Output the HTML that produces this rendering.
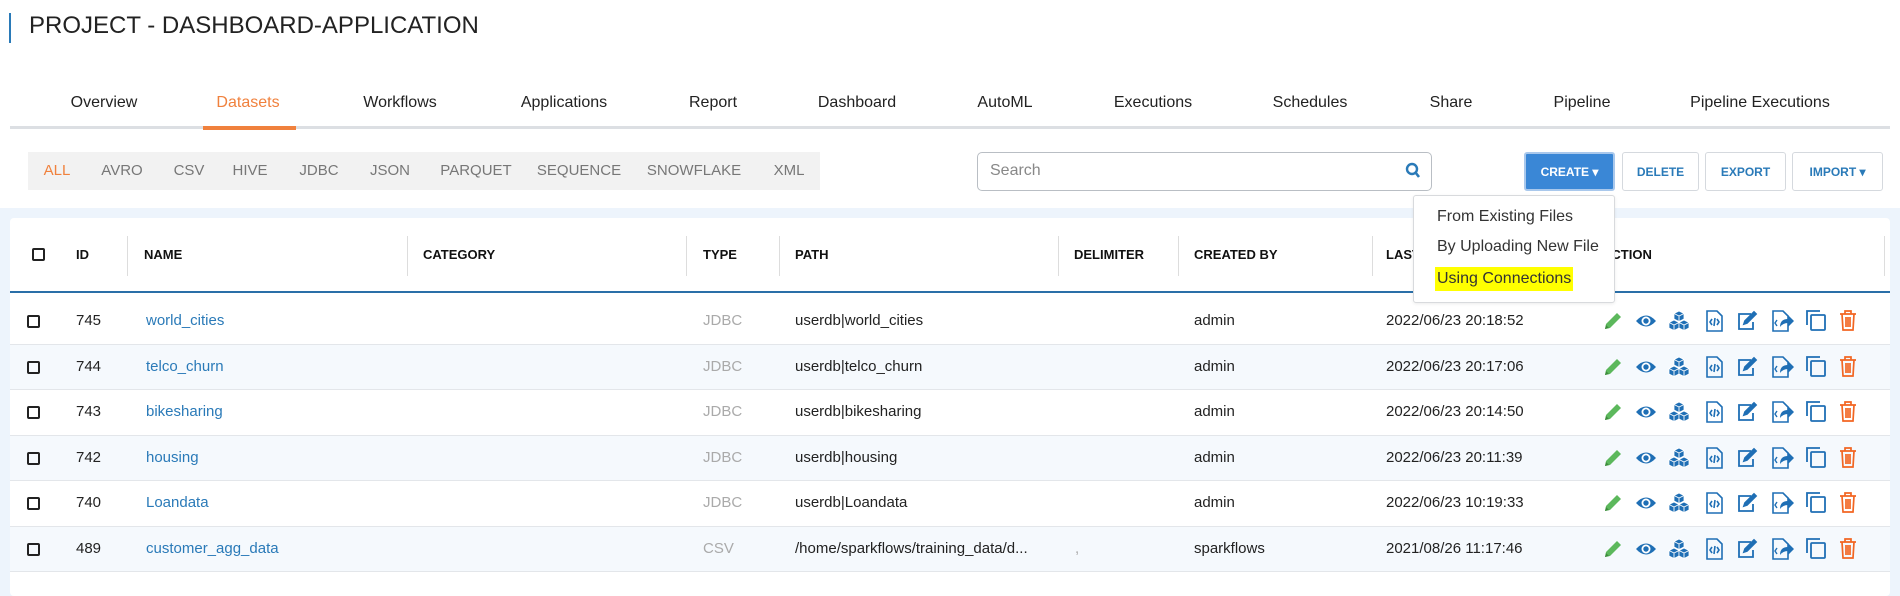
<!DOCTYPE html>
<html><head><meta charset="utf-8"><style>
*{margin:0;padding:0;box-sizing:border-box}
body{width:1900px;height:596px;background:#fff;font-family:"Liberation Sans",sans-serif;position:relative;overflow:hidden;color:#222}
.a{position:absolute;white-space:nowrap}
.tab{position:absolute;top:94px;font-size:16px;color:#222;transform:translateX(-50%)}
.flt{position:absolute;top:162px;font-size:15px;color:#777;transform:translateX(-50%)}
.btn{position:absolute;top:152px;height:39px;border:1px solid #d5d9de;border-radius:3px;background:#fff;color:#2a7ab8;font-size:12px;font-weight:bold;display:flex;align-items:center;justify-content:center}
.hd{position:absolute;top:247px;font-size:13px;font-weight:bold;color:#111}
.sep{position:absolute;top:236px;height:40px;width:1px;background:#ddd}
.row{position:absolute;left:10px;width:1880px;height:45.5px;border-bottom:1px solid #e3e6ea}
.c{position:absolute;font-size:15px;top:13px}
.cb{position:absolute;width:13px;height:13px;border:2px solid #222;border-radius:2px}
.ic{position:absolute;top:11px}
</style></head><body>
<div class="a" style="left:9px;top:13px;width:2px;height:30px;background:#2a7ab8"></div>
<div class="a" style="left:29px;top:12px;font-size:24px;color:#222">PROJECT - DASHBOARD-APPLICATION</div>

<div class="tab" style="left:104px">Overview</div>
<div class="tab" style="left:248px;color:#f0813d">Datasets</div>
<div class="tab" style="left:400px">Workflows</div>
<div class="tab" style="left:564px">Applications</div>
<div class="tab" style="left:713px">Report</div>
<div class="tab" style="left:857px">Dashboard</div>
<div class="tab" style="left:1005px">AutoML</div>
<div class="tab" style="left:1153px">Executions</div>
<div class="tab" style="left:1310px">Schedules</div>
<div class="tab" style="left:1451px">Share</div>
<div class="tab" style="left:1582px">Pipeline</div>
<div class="tab" style="left:1760px">Pipeline Executions</div>
<div class="a" style="left:10px;top:126px;width:1880px;height:3px;background:#dcdfe3"></div>
<div class="a" style="left:203px;top:126px;width:93px;height:4px;background:#f0813d"></div>

<div class="a" style="left:28px;top:152px;width:792px;height:38px;background:#f2f2f2"></div>
<div class="flt" style="left:57px;color:#f0813d">ALL</div>
<div class="flt" style="left:122px">AVRO</div>
<div class="flt" style="left:189px">CSV</div>
<div class="flt" style="left:250px">HIVE</div>
<div class="flt" style="left:319px">JDBC</div>
<div class="flt" style="left:390px">JSON</div>
<div class="flt" style="left:476px">PARQUET</div>
<div class="flt" style="left:579px">SEQUENCE</div>
<div class="flt" style="left:694px">SNOWFLAKE</div>
<div class="flt" style="left:789px">XML</div>

<div class="a" style="left:977px;top:152px;width:455px;height:39px;border:1px solid #b9bec4;border-radius:5px"></div>
<div class="a" style="left:990px;top:162px;font-size:16px;color:#888">Search</div>
<svg class="a" style="left:1405px;top:162px" width="16" height="18" viewBox="0 0 16 18"><circle cx="7" cy="7" r="5" fill="none" stroke="#2a7ab8" stroke-width="2.4"/><path d="M10.5 10.5L14 15" stroke="#2a7ab8" stroke-width="2.6"/></svg>

<div class="btn" style="left:1524px;width:91px;background:#3a87d6;color:#fff;border:2px solid #a9c8ec">CREATE ▾</div>
<div class="btn" style="left:1622px;width:77px">DELETE</div>
<div class="btn" style="left:1705px;width:81px">EXPORT</div>
<div class="btn" style="left:1792px;width:91px">IMPORT ▾</div>

<div class="a" style="left:0;top:208px;width:1900px;height:388px;background:#edf4fc"></div>
<div class="a" style="left:10px;top:218px;width:1880px;height:378px;background:#fff;border-radius:4px"></div>

<div class="cb" style="left:32px;top:248px"></div>
<div class="hd" style="left:76px">ID</div>
<div class="hd" style="left:144px">NAME</div>
<div class="hd" style="left:423px">CATEGORY</div>
<div class="hd" style="left:703px">TYPE</div>
<div class="hd" style="left:795px">PATH</div>
<div class="hd" style="left:1074px">DELIMITER</div>
<div class="hd" style="left:1194px">CREATED BY</div>
<div class="hd" style="left:1386px">LAST</div>
<div class="hd" style="left:1602px">ACTION</div>
<div class="sep" style="left:127px"></div><div class="sep" style="left:407px"></div><div class="sep" style="left:686px"></div><div class="sep" style="left:779px"></div><div class="sep" style="left:1058px"></div><div class="sep" style="left:1178px"></div><div class="sep" style="left:1372px"></div><div class="sep" style="left:1884px"></div>
<div class="a" style="left:10px;top:291px;width:1880px;height:2px;background:#2a6fa8"></div>

<svg width="0" height="0" style="position:absolute"><defs>
<g id="cube"><path d="M0 -5L5 -2.5V3L0 5.5L-5 3V-2.5z" fill="#1f6fb5" stroke="#fff" stroke-width="0.8"/><path d="M-5 -2.5L0 0L5 -2.5M0 0V5.5" fill="none" stroke="#fff" stroke-width="0.9"/></g>
<g id="icons">
<g transform="translate(0,0)"><path d="M3 19l1-5L15 3l4 4L8 18z" fill="#5cb85c"/><path d="M3 19l1-4 3 3z" fill="#3d8b3d"/></g>
<g transform="translate(33,0)"><path d="M1 11Q11 0 21 11Q11 22 1 11z" fill="#1f6fb5"/><circle cx="11" cy="11" r="4.5" fill="#fff"/><circle cx="11" cy="11" r="2.7" fill="#1f6fb5"/></g>
<g transform="translate(66,0)"><use href="#cube" x="11" y="6"/><use href="#cube" x="6" y="15"/><use href="#cube" x="16" y="15"/></g>
<g transform="translate(103,0)" fill="none" stroke="#1f6fb5" stroke-width="1.6"><path d="M2 1h10l5 5v15H2z"/><path d="M7 9l-2 3 2 3M12 9l2 3-2 3M10 8l-1 8"/></g>
<g transform="translate(134,0)" fill="none" stroke="#1f6fb5" stroke-width="1.8"><path d="M15 4H3v15h14v-7"/><path d="M8 14l1-3 9-9 2 2-9 9z" fill="#1f6fb5"/></g>
<g transform="translate(169,0)"><path d="M2 1h10l5 5v15H2z" fill="none" stroke="#1f6fb5" stroke-width="1.6"/><path d="M6 10l-2 3 2 3" fill="none" stroke="#1f6fb5" stroke-width="1.4"/><path d="M9 17q0-8 8-8V5l6 6-6 6v-4q-5 0-8 4z" fill="#1f6fb5"/></g>
<g transform="translate(204,0)" fill="none" stroke="#1f6fb5" stroke-width="1.8"><path d="M1 15V1h13"/><rect x="5" y="5" width="14" height="15" rx="1"/></g>
<g transform="translate(237,0)" fill="none" stroke="#f26522" stroke-width="1.7"><path d="M1 4h16M6 4V1h6v3M3 4l1 16h10l1-16M7 7v10M9 7v10M11 7v10"/></g>
</g></defs></svg>

<div class="row" style="top:299px"><div class="cb" style="left:17px;top:16px"></div><div class="c" style="left:66px">745</div><div class="c" style="left:136px;color:#2a7ab8">world_cities</div><div class="c" style="left:693px;color:#aaa">JDBC</div><div class="c" style="left:785px">userdb|world_cities</div><div class="c" style="left:1184px">admin</div><div class="c" style="left:1376px">2022/06/23 20:18:52</div><svg class="ic" style="left:1592px" width="270" height="24"><use href="#icons"/></svg></div>
<div class="row" style="top:344.5px;background:#f5f9fd"><div class="cb" style="left:17px;top:16px"></div><div class="c" style="left:66px">744</div><div class="c" style="left:136px;color:#2a7ab8">telco_churn</div><div class="c" style="left:693px;color:#aaa">JDBC</div><div class="c" style="left:785px">userdb|telco_churn</div><div class="c" style="left:1184px">admin</div><div class="c" style="left:1376px">2022/06/23 20:17:06</div><svg class="ic" style="left:1592px" width="270" height="24"><use href="#icons"/></svg></div>
<div class="row" style="top:390px"><div class="cb" style="left:17px;top:16px"></div><div class="c" style="left:66px">743</div><div class="c" style="left:136px;color:#2a7ab8">bikesharing</div><div class="c" style="left:693px;color:#aaa">JDBC</div><div class="c" style="left:785px">userdb|bikesharing</div><div class="c" style="left:1184px">admin</div><div class="c" style="left:1376px">2022/06/23 20:14:50</div><svg class="ic" style="left:1592px" width="270" height="24"><use href="#icons"/></svg></div>
<div class="row" style="top:435.5px;background:#f5f9fd"><div class="cb" style="left:17px;top:16px"></div><div class="c" style="left:66px">742</div><div class="c" style="left:136px;color:#2a7ab8">housing</div><div class="c" style="left:693px;color:#aaa">JDBC</div><div class="c" style="left:785px">userdb|housing</div><div class="c" style="left:1184px">admin</div><div class="c" style="left:1376px">2022/06/23 20:11:39</div><svg class="ic" style="left:1592px" width="270" height="24"><use href="#icons"/></svg></div>
<div class="row" style="top:481px"><div class="cb" style="left:17px;top:16px"></div><div class="c" style="left:66px">740</div><div class="c" style="left:136px;color:#2a7ab8">Loandata</div><div class="c" style="left:693px;color:#aaa">JDBC</div><div class="c" style="left:785px">userdb|Loandata</div><div class="c" style="left:1184px">admin</div><div class="c" style="left:1376px">2022/06/23 10:19:33</div><svg class="ic" style="left:1592px" width="270" height="24"><use href="#icons"/></svg></div>
<div class="row" style="top:526.5px;background:#f5f9fd"><div class="cb" style="left:17px;top:16px"></div><div class="c" style="left:66px">489</div><div class="c" style="left:136px;color:#2a7ab8">customer_agg_data</div><div class="c" style="left:693px;color:#aaa">CSV</div><div class="c" style="left:785px">/home/sparkflows/training_data/d...</div><div class="c" style="left:1065px;color:#aaa">,</div><div class="c" style="left:1184px">sparkflows</div><div class="c" style="left:1376px">2021/08/26 11:17:46</div><svg class="ic" style="left:1592px" width="270" height="24"><use href="#icons"/></svg></div>

<div class="a" style="left:1413px;top:195px;width:202px;height:108px;background:#fff;border:1px solid #d8dadd;border-radius:3px;box-shadow:0 1px 3px rgba(0,0,0,.08)"></div>
<div class="a" style="left:1437px;top:208px;font-size:16px;color:#333">From Existing Files</div>
<div class="a" style="left:1437px;top:238px;font-size:16px;color:#333">By Uploading New File</div>
<div class="a" style="left:1435px;top:267px;width:138px;height:24px;background:#ffff00"></div>
<div class="a" style="left:1437px;top:270px;font-size:16px;color:#333">Using Connections</div>
</body></html>
